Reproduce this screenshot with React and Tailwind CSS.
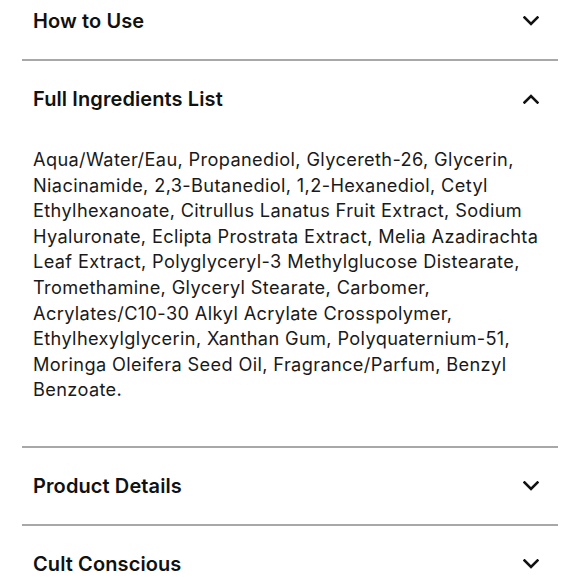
import React from "react";

function Chevron({ up }) {
  return (
    <svg width="16" height="10" viewBox="0 0 16 10" className="shrink-0">
      <path
        d={up ? "M1.5 8.5 L8 2 L14.5 8.5" : "M1.5 1.5 L8 8 L14.5 1.5"}
        fill="none"
        stroke="#111"
        strokeWidth="2.6"
        strokeLinecap="square"
        strokeLinejoin="miter"
      />
    </svg>
  );
}

function Header({ title, up }) {
  return (
    <div className="h-[76px] flex items-center justify-between pl-[11px] pr-[19px]">
      <span className="text-[20px] font-semibold text-[#111] tracking-[0.1px]">{title}</span>
      <Chevron up={up} />
    </div>
  );
}

const Divider = () => <div className="h-[2px] bg-[#a8a8a8]" />;

const lines = [
  "Aqua/Water/Eau, Propanediol, Glycereth-26, Glycerin,",
  "Niacinamide, 2,3-Butanediol, 1,2-Hexanediol, Cetyl",
  "Ethylhexanoate, Citrullus Lanatus Fruit Extract, Sodium",
  "Hyaluronate, Eclipta Prostrata Extract, Melia Azadirachta",
  "Leaf Extract, Polyglyceryl-3 Methylglucose Distearate,",
  "Tromethamine, Glyceryl Stearate, Carbomer,",
  "Acrylates/C10-30 Alkyl Acrylate Crosspolymer,",
  "Ethylhexylglycerin, Xanthan Gum, Polyquaternium-51,",
  "Moringa Oleifera Seed Oil, Fragrance/Parfum, Benzyl",
  "Benzoate.",
];

export default function App() {
  return (
    <div
      className="w-[580px] h-[580px] overflow-hidden bg-white"
      style={{ fontFamily: "Inter, 'Noto Sans', sans-serif" }}
    >
      <div className="mx-[22px] -mt-[17px]">
        <Header title="How to Use" />
        <Divider />
        <Header title="Full Ingredients List" up />
        <div className="mt-[10px] pl-[11px] pb-[43px] text-[18.2px] leading-[25.6px] text-[#1a1a1a] tracking-[0.36px]">
          {lines.map((l, i) => (
            <div key={i} className="whitespace-nowrap">{l}</div>
          ))}
        </div>
        <Divider />
        <Header title="Product Details" />
        <Divider />
        <Header title="Cult Conscious" />
      </div>
    </div>
  );
}
